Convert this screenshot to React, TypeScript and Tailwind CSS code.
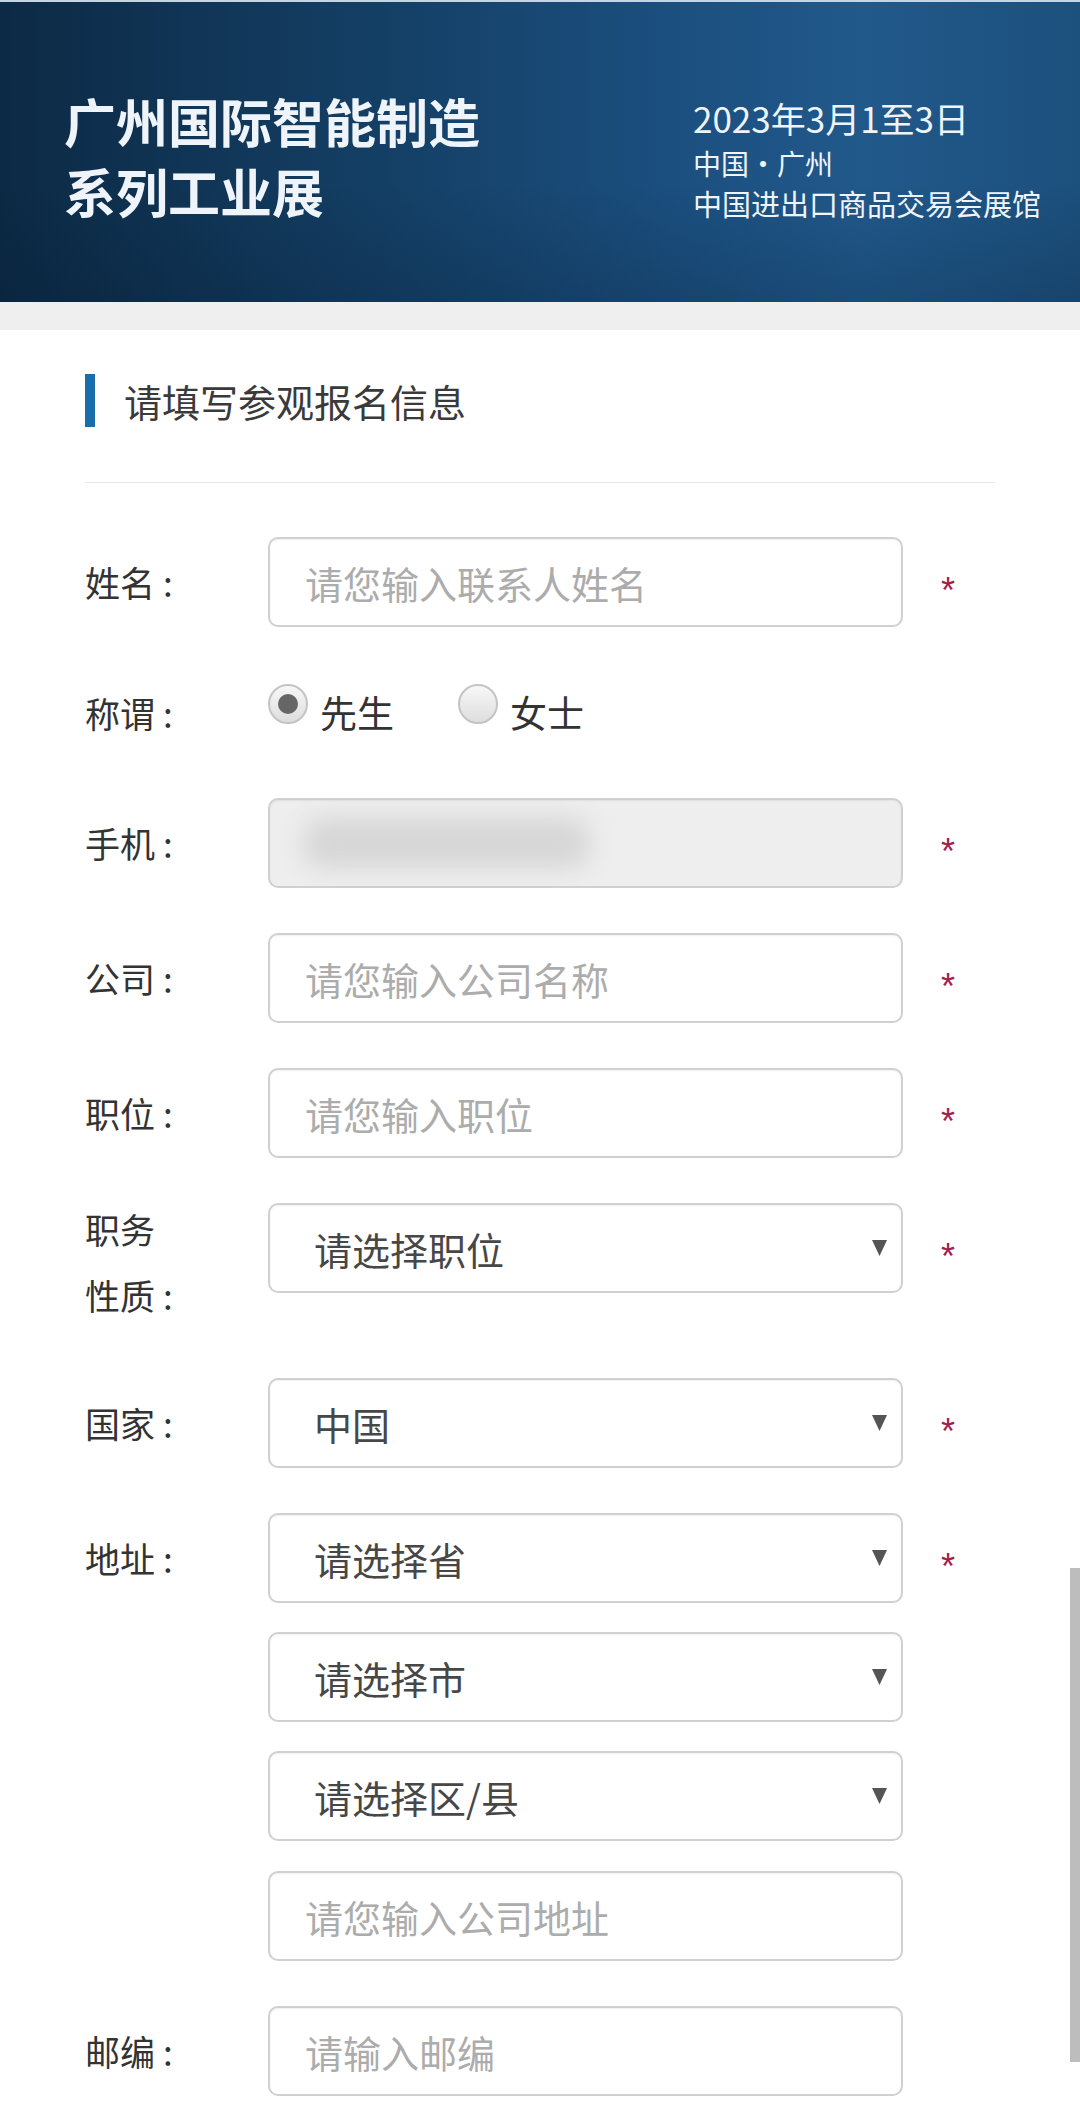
import type { ReactNode } from 'react';

const CJK = "font-['Noto_Sans_CJK_SC','Noto_Sans',sans-serif]";
const BOX = 'h-[90px] w-[635px] shrink-0 rounded-[10px] border-2 border-[#d0d0d0] shadow-[inset_0_1px_2px_rgba(0,0,0,0.06)]';

function Star() {
  return (
    <div className="ml-[38px] h-[90px] font-['Liberation_Sans',Arial,sans-serif] text-[36px] leading-[108px] text-[#a2204d]">*</div>
  );
}

function Label({ text }: { text: string }) {
  return (
    <div className="flex h-[90px] w-[183px] shrink-0 items-center text-[35px] text-[#333]">
      {text}
      <span className="ml-[8px]">:</span>
    </div>
  );
}

function Row({ label, required, className, children }: { label?: ReactNode; required?: boolean; className?: string; children: ReactNode }) {
  return (
    <div className={`flex items-start ${className ?? ''}`}>
      {label ?? <div className="w-[183px] shrink-0" />}
      {children}
      {required && <Star />}
    </div>
  );
}

function TextField({ placeholder }: { placeholder: string }) {
  return (
    <input
      placeholder={placeholder}
      className={`${BOX} ${CJK} bg-white pl-[35px] text-[38px] text-[#333] outline-none placeholder:text-[#acacac]`}
    />
  );
}

function SelectField({ value }: { value: string }) {
  return (
    <div className={`${BOX} flex items-center justify-between bg-white pl-[44px] pr-[14px] text-[38px] text-[#474747]`}>
      <span>{value}</span>
      <svg width="15" height="16" viewBox="0 0 15 16">
        <polygon points="0,0 15,0 7.5,16" fill="#555" />
      </svg>
    </div>
  );
}

function Radio({ checked, label }: { checked?: boolean; label: string }) {
  return (
    <div className="flex items-center">
      <div className="mb-[18px] flex h-[40px] w-[40px] items-center justify-center rounded-full border-2 border-[#c4c4c4] bg-[linear-gradient(180deg,#f7f7f7_0%,#dedede_100%)]">
        {checked && <div className="h-[20px] w-[20px] rounded-full bg-[#666]" />}
      </div>
      <span className="ml-[12px] text-[37px] text-[#333]">{label}</span>
    </div>
  );
}

export default function App() {
  return (
    <div className={`relative h-[2117px] w-[1080px] overflow-hidden bg-white ${CJK}`}>
      <div className="h-[2px] bg-[#c4d5e4]" />
      <header className="flex h-[300px] items-start bg-[linear-gradient(180deg,rgba(0,0,0,0)_60%,rgba(3,20,40,0.2)_100%),linear-gradient(90deg,#0c2a45_0%,#143f65_35%,#1b4f7f_62%,#21598b_80%,#1c507d_100%)] pl-[64px] pt-[84px] text-[#eef4f9]">
        <h1 className="w-[629px] shrink-0 text-[52px] font-bold leading-[70px]">
          广州国际智能制造
          <br />
          系列工业展
        </h1>
        <div className="mt-[10px]">
          <p className="text-[35px] leading-[44px]">2023年3月1至3日</p>
          <p className="mt-[3px] text-[28px] leading-[40px]">中国·广州</p>
          <p className="text-[29px] leading-[40px]">中国进出口商品交易会展馆</p>
        </div>
      </header>
      <div className="h-[28px] bg-[#efefef]" />

      <main className="px-[85px]">
        <div className="mt-[44px] flex h-[53px] items-center">
          <div className="h-full w-[10px] bg-[#1a6cab]" />
          <h2 className="ml-[29px] text-[38px] text-[#3a3a3a]">请填写参观报名信息</h2>
        </div>
        <div className="mt-[55px] h-px bg-[#e6e6e6]" />

        <Row className="mt-[54px]" label={<Label text="姓名" />} required>
          <TextField placeholder="请您输入联系人姓名" />
        </Row>

        <Row className="mt-[41px] h-[90px] items-center" label={<Label text="称谓" />}>
          <div className="flex h-[90px] items-center gap-[64px]">
            <Radio checked label="先生" />
            <Radio label="女士" />
          </div>
        </Row>

        <Row className="mt-[40px]" label={<Label text="手机" />} required>
          <div className={`${BOX} flex items-center overflow-hidden bg-[#eeeeee] pl-[34px]`}>
            <div className="h-[50px] w-[285px] rounded-[18px] bg-[#d6d6d6] blur-[12px]" />
          </div>
        </Row>

        <Row className="mt-[45px]" label={<Label text="公司" />} required>
          <TextField placeholder="请您输入公司名称" />
        </Row>

        <Row className="mt-[45px]" label={<Label text="职位" />} required>
          <TextField placeholder="请您输入职位" />
        </Row>

        <Row
          className="mt-[45px]"
          label={
            <div className="-mt-[7px] w-[183px] shrink-0 text-[35px] leading-[66px] text-[#333]">
              职务
              <br />
              性质<span className="ml-[8px]">:</span>
            </div>
          }
          required
        >
          <SelectField value="请选择职位" />
        </Row>

        <Row className="mt-[50px]" label={<Label text="国家" />} required>
          <SelectField value="中国" />
        </Row>

        <Row className="mt-[45px]" label={<Label text="地址" />} required>
          <SelectField value="请选择省" />
        </Row>
        <Row className="mt-[29px]">
          <SelectField value="请选择市" />
        </Row>
        <Row className="mt-[29px]">
          <SelectField value="请选择区/县" />
        </Row>
        <Row className="mt-[30px]">
          <TextField placeholder="请您输入公司地址" />
        </Row>

        <Row className="mt-[45px]" label={<Label text="邮编" />}>
          <TextField placeholder="请输入邮编" />
        </Row>
      </main>

      <div className="absolute right-0 top-[1568px] h-[494px] w-[10px] bg-[#bdbdbd]" />
    </div>
  );
}
